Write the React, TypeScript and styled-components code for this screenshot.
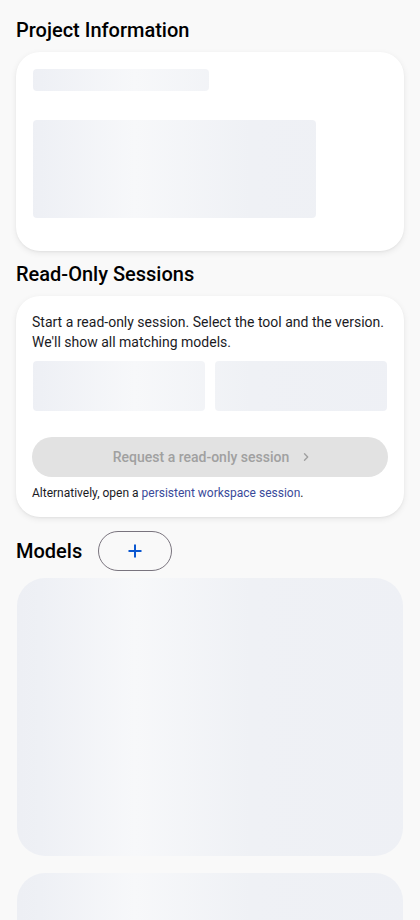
import React from "react";
import styled, { createGlobalStyle } from "styled-components";

const Global = createGlobalStyle`
  html, body {
    margin: 0;
    padding: 0;
    background: #f9f9f9;
    font-family: Roboto, "Noto Sans", "Liberation Sans", sans-serif;
    color: #1b1b1f;
  }
  * { box-sizing: border-box; }
`;

const Page = styled.main`
  padding: 16px 16px 0;
  display: flex;
  flex-direction: column;
  height: 920px;
  overflow: hidden;
`;

const SectionTitle = styled.h2`
  margin: 0;
  font-size: 20px;
  line-height: 28px;
  font-weight: 500;
  color: #000;
`;

const Section = styled.section<{ $top?: number; $gap?: number }>`
  display: flex;
  flex-direction: column;
  gap: ${(p) => p.$gap ?? 8}px;
  margin-top: ${(p) => p.$top ?? 0}px;
`;

const Card = styled.div<{ $height?: number }>`
  background: #fff;
  border-radius: 24px;
  padding: 16px;
  box-shadow: 0 2px 6px rgba(0, 0, 0, 0.08), 0 1px 2px rgba(0, 0, 0, 0.04);
  ${(p) => (p.$height ? `height: ${p.$height}px;` : "")}
  display: flex;
  flex-direction: column;
`;

const Skeleton = styled.div<{ $w?: string; $h: number; $r?: number; $mt?: number; $mb?: number }>`
  width: ${(p) => p.$w ?? "auto"};
  height: ${(p) => p.$h}px;
  margin: 1px;
  margin-top: ${(p) => 1 + (p.$mt ?? 0)}px;
  margin-bottom: ${(p) => 1 + (p.$mb ?? 0)}px;
  border-radius: ${(p) => p.$r ?? 4}px;
  background: linear-gradient(
    90deg,
    #eceef3 0px,
    #eef0f5 40px,
    #f7f8fa 135px,
    #eff1f5 250px,
    #eef0f5 420px
  );
  background-attachment: fixed;
`;

const Body = styled.p`
  margin: 0;
  font-size: 14px;
  line-height: 20px;
  letter-spacing: 0;
  color: #1b1b1f;
`;

const Line = styled.span`
  display: block;
  white-space: nowrap;
`;

const Pickers = styled.div`
  display: grid;
  grid-template-columns: 1fr 1fr;
  gap: 8px;
  margin-top: 8px;
`;

const RequestButton = styled.button`
  margin-top: 25px;
  height: 40px;
  border: none;
  border-radius: 20px;
  background: #e2e2e2;
  color: #a0a0a0;
  font-family: inherit;
  font-size: 14px;
  font-weight: 500;
  letter-spacing: 0;
  display: flex;
  align-items: center;
  justify-content: center;
  gap: 12px;
  padding: 0 0 0 4px;
  cursor: default;
`;

const Note = styled.p`
  margin: 8px 0 0;
  font-size: 12px;
  line-height: 16px;
  color: #1b1b1f;
`;

const Link = styled.a`
  color: #3a4a9a;
  text-decoration: none;
`;

const HeaderRow = styled.div`
  display: flex;
  align-items: center;
  gap: 16px;
  height: 40px;
`;

const AddButton = styled.button`
  width: 74px;
  height: 40px;
  border: 1px solid #79747e;
  border-radius: 20px;
  background: transparent;
  display: flex;
  align-items: center;
  justify-content: center;
  padding: 0;
  color: #0b57d0;
`;

const ModelList = styled.div`
  display: flex;
  flex-direction: column;
  gap: 15px;
`;

const Chevron = () => (
  <svg width="10" height="10" viewBox="0 0 10 10" fill="none">
    <path d="M3.5 1.8 L6.7 5 L3.5 8.2" stroke="#a0a0a0" strokeWidth="1.4" strokeLinecap="round" strokeLinejoin="round" />
  </svg>
);

const Plus = () => (
  <svg width="16" height="16" viewBox="0 0 16 16" fill="none">
    <path d="M8 1.5 V14.5 M1.5 8 H14.5" stroke="currentColor" strokeWidth="2" />
  </svg>
);

export default function App() {
  return (
    <>
      <Global />
      <Page>
        <Section>
          <SectionTitle>Project Information</SectionTitle>
          <Card $height={199}>
            <Skeleton $w="176px" $h={22} />
            <Skeleton $w="283px" $h={98} $mt={27} />
          </Card>
        </Section>

        <Section $top={9}>
          <SectionTitle>Read-Only Sessions</SectionTitle>
          <Card>
            <Body>
              <Line>Start a read-only session. Select the tool and the version.</Line>
              <Line>We'll show all matching models.</Line>
            </Body>
            <Pickers>
              <Skeleton $h={50} />
              <Skeleton $h={50} />
            </Pickers>
            <RequestButton disabled>
              Request a read-only session
              <Chevron />
            </RequestButton>
            <Note>
              Alternatively, open a <Link href="#">persistent workspace session</Link>.
            </Note>
          </Card>
        </Section>

        <Section $top={14} $gap={6}>
          <HeaderRow>
            <SectionTitle>Models</SectionTitle>
            <AddButton aria-label="Add model">
              <Plus />
            </AddButton>
          </HeaderRow>
          <ModelList>
            <Skeleton $h={278} $r={28} />
            <Skeleton $h={278} $r={28} />
          </ModelList>
        </Section>
      </Page>
    </>
  );
}
